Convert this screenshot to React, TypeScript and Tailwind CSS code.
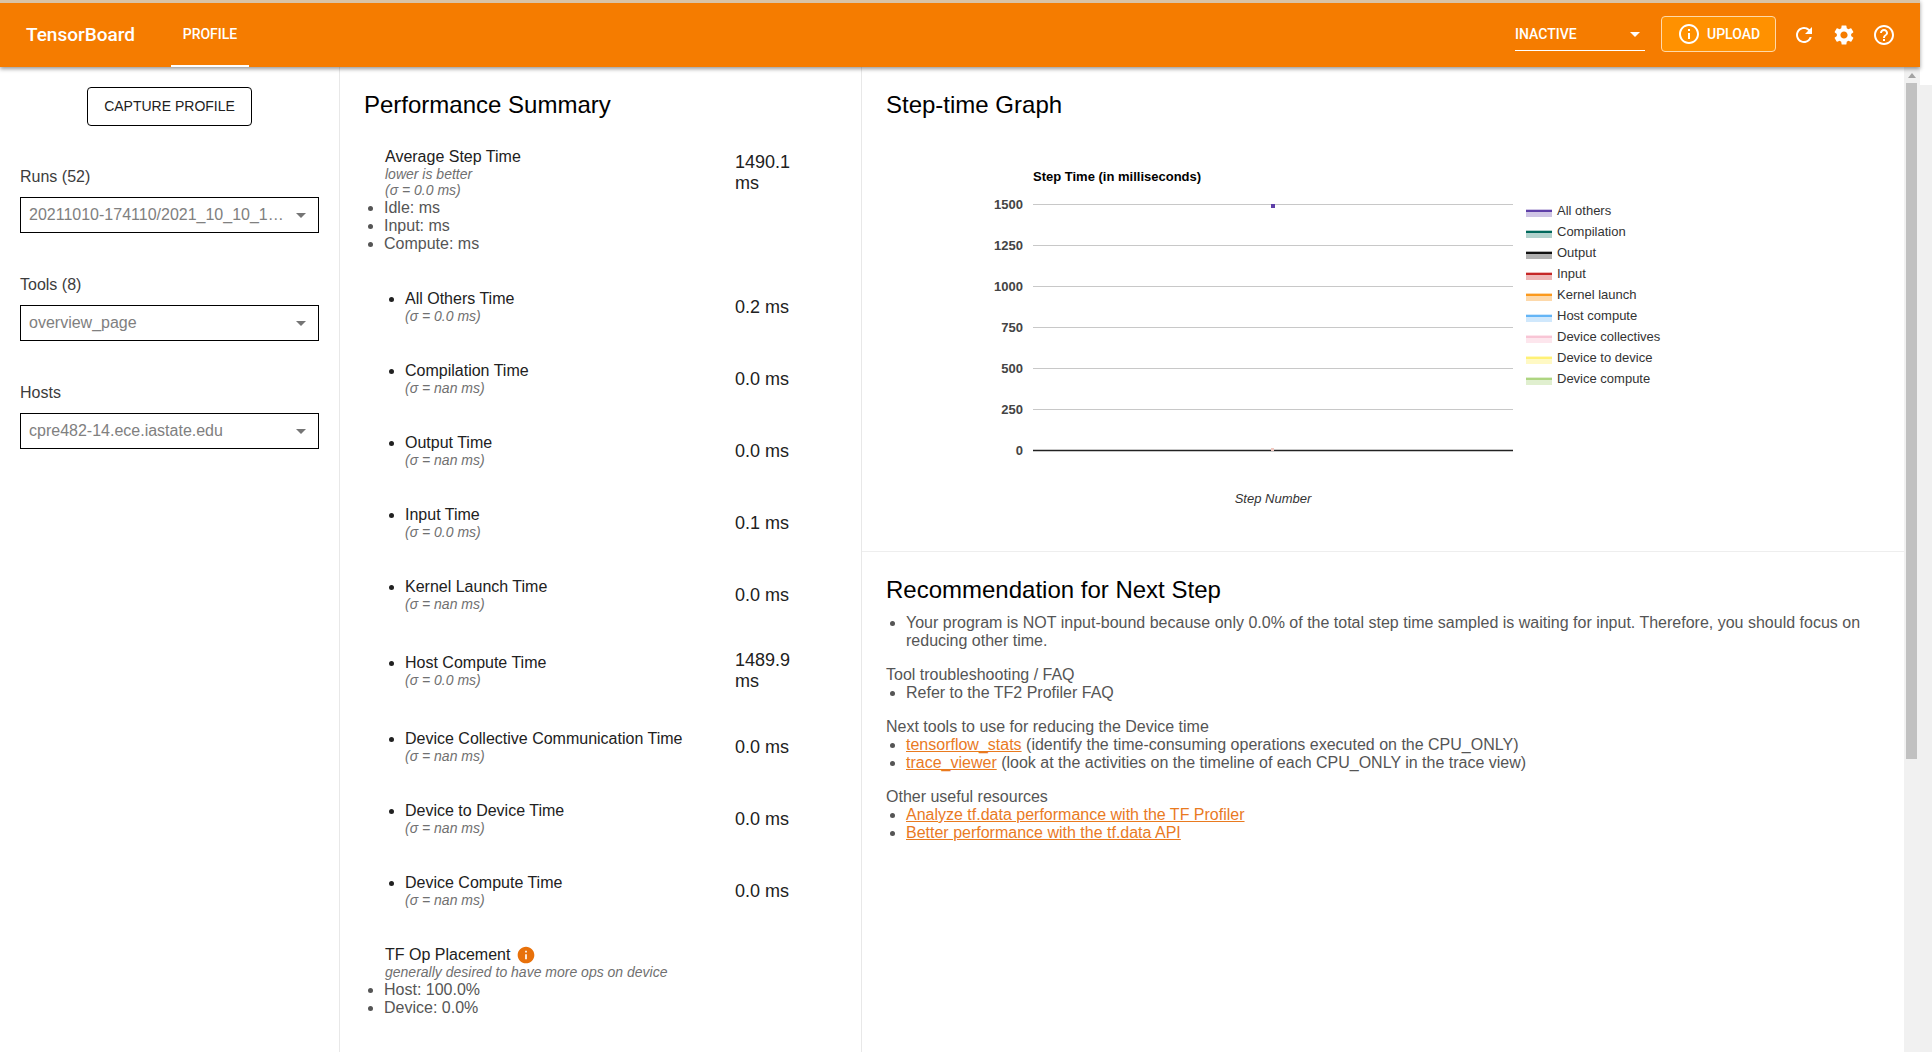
import { MdArrowDropDown, MdHelpOutline, MdInfo, MdInfoOutline, MdRefresh, MdSettings } from "react-icons/md"

const breakdown = [
  { name: "All Others Time", sub: "(σ = 0.0 ms)", value: "0.2 ms" },
  { name: "Compilation Time", sub: "(σ = nan ms)", value: "0.0 ms" },
  { name: "Output Time", sub: "(σ = nan ms)", value: "0.0 ms" },
  { name: "Input Time", sub: "(σ = 0.0 ms)", value: "0.1 ms" },
  { name: "Kernel Launch Time", sub: "(σ = nan ms)", value: "0.0 ms" },
  { name: "Host Compute Time", sub: "(σ = 0.0 ms)", value: "1489.9 ms" },
  { name: "Device Collective Communication Time", sub: "(σ = nan ms)", value: "0.0 ms" },
  { name: "Device to Device Time", sub: "(σ = nan ms)", value: "0.0 ms" },
  { name: "Device Compute Time", sub: "(σ = nan ms)", value: "0.0 ms" },
]

const legend = [
  { name: "All others", color: "#5e3fa8", light: "#cfc5e5" },
  { name: "Compilation", color: "#00695c", light: "#b2d2cd" },
  { name: "Output", color: "#111111", light: "#b0b0b0" },
  { name: "Input", color: "#c62828", light: "#eeb8b8" },
  { name: "Kernel launch", color: "#fb9a1e", light: "#fdd9ab" },
  { name: "Host compute", color: "#64b5f6", light: "#d0e8fc" },
  { name: "Device collectives", color: "#f8c5d5", light: "#fde6ed" },
  { name: "Device to device", color: "#fff176", light: "#fff9c4" },
  { name: "Device compute", color: "#aed581", light: "#e0efcf" },
]

const ticks = ["1500", "1250", "1000", "750", "500", "250", "0"]

function SideSelect({ label, value }: { label: string; value: string }) {
  return (
    <div className="mb-[43px]">
      <div className="text-[16px] leading-[18px] text-[#3c3c3c]">{label}</div>
      <div className="mt-[11px] h-[36px] border border-black flex items-center pl-[8px] pr-[5px]">
        <span className="flex-1 whitespace-nowrap overflow-hidden text-[16px] text-[#808080]">{value}</span>
        <MdArrowDropDown className="w-[24px] h-[24px] text-[#757575] shrink-0" />
      </div>
    </div>
  )
}

function StepChart() {
  return (
    <svg width="1000" height="380" viewBox="0 0 1000 380" className="block" fontFamily="'Liberation Sans', Arial, sans-serif">
      <text x="147" y="36" fontSize="13" fontWeight="700" fill="#000">Step Time (in milliseconds)</text>
      {ticks.map((t, i) => (
        <g key={t}>
          <line x1="147" x2="627" y1={59.5 + i * 41} y2={59.5 + i * 41} stroke={i === 6 ? "#222222" : "#c8c8c8"} strokeWidth={i === 6 ? 1.5 : 1} />
          <text x="137" y={64 + i * 41} fontSize="13" fontWeight="700" fill="#444444" textAnchor="end">{t}</text>
        </g>
      ))}
      <rect x="385" y="59" width="4" height="4" fill="#5e3fa8" />
      <rect x="385" y="303" width="3" height="3" fill="#f0c8c0" />
      {legend.map((l, i) => (
        <g key={l.name}>
          <rect x="640" y={64 + i * 21} width="26" height="8" fill={l.light} />
          <rect x="640" y={65 + i * 21} width="26" height="2" fill={l.color} />
          <text x="671" y={69.5 + i * 21} fontSize="13" fill="#333333">{l.name}</text>
        </g>
      ))}
      <text x="387" y="358" fontSize="13" fontStyle="italic" fill="#333333" textAnchor="middle">Step Number</text>
    </svg>
  )
}

export default function App() {
  return (
    <div className="h-screen w-full overflow-hidden flex flex-col bg-white text-[16px] font-['Liberation_Sans',Arial,sans-serif]">
      {/* Top bar */}
      <div className="w-[1920px] shrink-0 border-t-[3px] border-[#d9c3a6] bg-[#f57c00] h-[67px] flex items-center text-white shadow-[0_2px_4px_rgba(0,0,0,0.4)] relative z-10 font-['Roboto',sans-serif]">
        <div className="ml-[26px] text-[19px] font-medium w-[145px]">TensorBoard</div>
        <div className="h-full w-[78px] flex items-center justify-center text-[14px] font-medium border-b-2 border-white pt-[1px]">PROFILE</div>
        <div className="flex-1" />
        <div className="w-[130px] h-[32px] mt-[-1px] border-b border-white flex items-center text-[14px] font-medium justify-between pr-[1px]">
          <span>INACTIVE</span>
          <MdArrowDropDown className="w-[24px] h-[24px] -mr-[3px]" />
        </div>
        <button className="ml-[16px] w-[115px] h-[36px] mt-[-2px] rounded border border-[#ffd9a8] bg-[#ff9100] flex items-center pl-[17px] text-[14px] font-medium">
          <MdInfoOutline className="w-[24px] h-[24px] -ml-[2px]" />
          <span className="ml-[6px]">UPLOAD</span>
        </button>
        <div className="ml-[16px] flex items-center gap-[16px] pr-[24px]">
          <MdRefresh className="w-[24px] h-[24px]" />
          <MdSettings className="w-[24px] h-[24px]" />
          <MdHelpOutline className="w-[24px] h-[24px]" />
        </div>
      </div>

      <div className="flex-1 min-h-0 flex">
        {/* Sidebar */}
        <div className="w-[340px] shrink-0 border-r border-[#e8e8e8] px-[20px] pt-[20px]">
          <div className="flex justify-center mb-[42px]">
            <button className="w-[165px] h-[39px] border border-black rounded text-[14px] text-[#212121]">CAPTURE PROFILE</button>
          </div>
          <SideSelect label="Runs (52)" value="20211010-174110/2021_10_10_1…" />
          <SideSelect label="Tools (8)" value="overview_page" />
          <SideSelect label="Hosts" value="cpre482-14.ece.iastate.edu" />
        </div>

        {/* Performance summary */}
        <div className="w-[522px] shrink-0 border-r border-[#e8e8e8] pl-[24px] pt-[22px]">
          <h2 className="text-[24px] leading-[32px] text-black">Performance Summary</h2>
          <div className="mt-[27px] flex items-start">
            <div className="w-[371px] text-[#555555]">
              <div className="pl-[21px] leading-[18px] text-[#212121]">Average Step Time</div>
              <div className="pl-[21px] text-[14px] leading-[16px] italic text-[#707070]">lower is better</div>
              <div className="pl-[21px] text-[14px] leading-[17px] italic text-[#707070]">(σ = 0.0 ms)</div>
              <ul className="list-disc pl-[20px] leading-[18px]">
                <li>Idle: ms</li>
                <li>Input: ms</li>
                <li>Compute: ms</li>
              </ul>
            </div>
            <div className="w-[72px] mt-[4px] text-[18px] leading-[21px] text-[#212121]">1490.1 ms</div>
          </div>
          <div className="mt-[18px]">
            {breakdown.map((b) => (
              <div key={b.name} className="flex items-center py-[19px]">
                <ul className="w-[371px] list-disc pl-[41px]">
                  <li className="text-[#212121] leading-[18px] h-[34px]">
                    {b.name}
                    <div className="text-[14px] leading-[17px] italic text-[#707070]">{b.sub}</div>
                  </li>
                </ul>
                <div className="w-[72px] text-[18px] leading-[21px] text-[#212121]">{b.value}</div>
              </div>
            ))}
          </div>
          <div className="mt-[19px] text-[#555555]">
            <div className="pl-[21px] h-[18px] leading-[18px] text-[#212121] flex items-center gap-[6px]">
              TF Op Placement
              <MdInfo className="w-[20px] h-[20px] text-[#e8710a]" />
            </div>
            <div className="pl-[21px] text-[14px] leading-[17px] italic text-[#707070]">generally desired to have more ops on device</div>
            <ul className="list-disc pl-[20px] leading-[18px]">
              <li>Host: 100.0%</li>
              <li>Device: 0.0%</li>
            </ul>
          </div>
        </div>

        {/* Step-time graph and recommendation */}
        <div className="flex-1 min-w-0">
          <div className="h-[485px] border-b border-[#eeeeee] pt-[22px] pl-[24px]">
            <h2 className="text-[24px] leading-[32px] text-black">Step-time Graph</h2>
            <div className="mt-[24px]">
              <StepChart />
            </div>
          </div>
          <div className="pl-[24px] pt-[22px] text-[#555555] leading-[18px]">
            <h2 className="text-[24px] leading-[32px] text-black">Recommendation for Next Step</h2>
            <ul className="list-disc pl-[20px] mt-[8px] w-[1000px]">
              <li>Your program is NOT input-bound because only 0.0% of the total step time sampled is waiting for input. Therefore, you should focus on reducing other time.</li>
            </ul>
            <div className="mt-[16px]">Tool troubleshooting / FAQ</div>
            <ul className="list-disc pl-[20px]">
              <li>Refer to the TF2 Profiler FAQ</li>
            </ul>
            <div className="mt-[16px]">Next tools to use for reducing the Device time</div>
            <ul className="list-disc pl-[20px]">
              <li><a className="text-[#e97a1f] underline">tensorflow_stats</a> (identify the time-consuming operations executed on the CPU_ONLY)</li>
              <li><a className="text-[#e97a1f] underline">trace_viewer</a> (look at the activities on the timeline of each CPU_ONLY in the trace view)</li>
            </ul>
            <div className="mt-[16px]">Other useful resources</div>
            <ul className="list-disc pl-[20px]">
              <li><a className="text-[#e97a1f] underline">Analyze tf.data performance with the TF Profiler</a></li>
              <li><a className="text-[#e97a1f] underline">Better performance with the tf.data API</a></li>
            </ul>
          </div>
        </div>

        {/* Scrollbar */}
        <div className="w-[16px] shrink-0 bg-[#f1f1f1] flex flex-col items-center pt-[6px] pr-[1px]">
          <div className="w-0 h-0 border-x-[4px] border-x-transparent border-b-[5px] border-b-[#a3a3a3]" />
          <div className="mt-[5px] w-[11px] h-[676px] bg-[#c1c1c1]" />
        </div>
        <div className="w-[12px] shrink-0 flex flex-col">
          <div className="h-[18px]" />
          <div className="flex-1 bg-[#f0f0f0]" />
        </div>
      </div>
    </div>
  )
}
